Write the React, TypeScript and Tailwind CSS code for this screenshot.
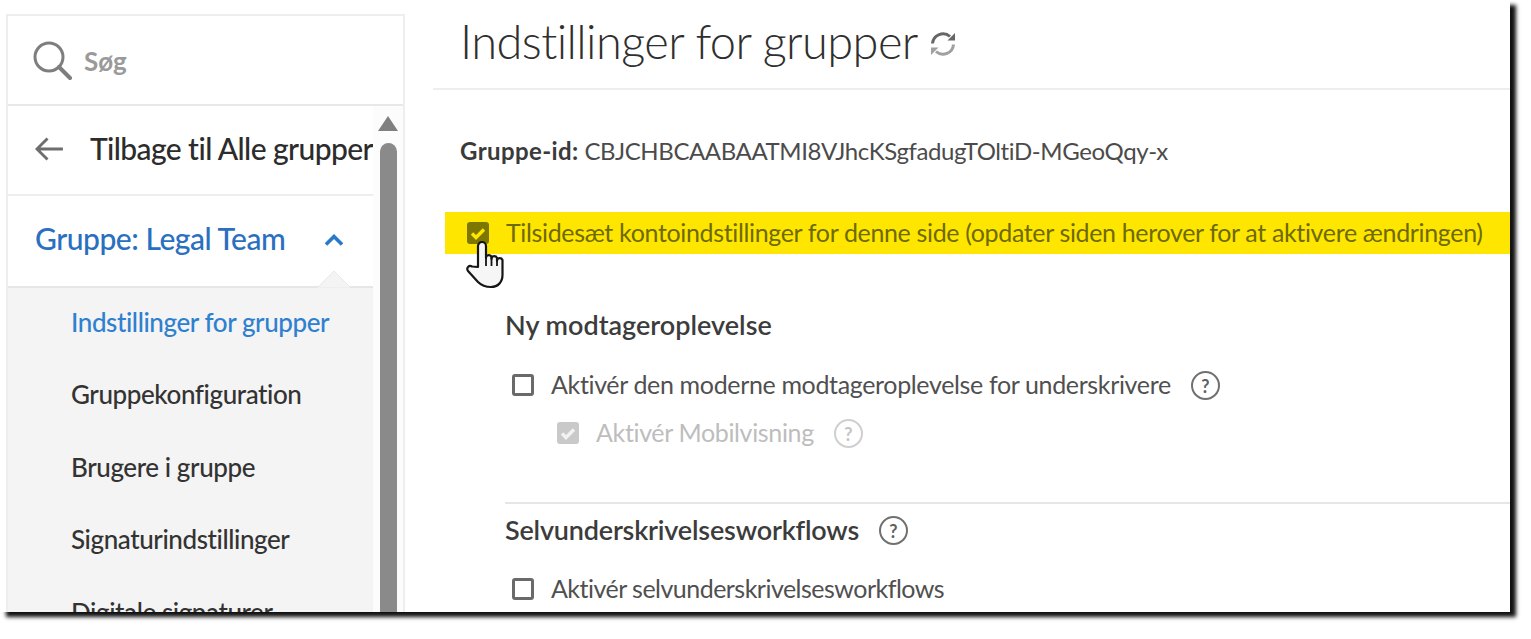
const subItems = [
  { label: 'Indstillinger for grupper', active: true },
  { label: 'Gruppekonfiguration', active: false },
  { label: 'Brugere i gruppe', active: false },
  { label: 'Signaturindstillinger', active: false },
  { label: 'Digitale signaturer', active: false },
];

function HelpIcon({ muted = false }: { muted?: boolean }) {
  return (
    <span
      className={`grid h-[29px] w-[29px] shrink-0 place-items-center rounded-full border-[2.5px] text-[18px] font-bold ${
        muted ? 'border-[#cfcfcf] text-[#c4c4c4]' : 'border-[#707070] text-[#606060]'
      }`}
    >
      ?
    </span>
  );
}

function Box() {
  return <span className="h-[22px] w-[22px] shrink-0 rounded-[3px] border-[3px] border-[#6a6a6a] bg-white" />;
}

function CheckMark({ stroke }: { stroke: string }) {
  return (
    <svg viewBox="0 0 22 22" className="h-full w-full" fill="none">
      <path d="M5 11.5l4 4 8-8" stroke={stroke} strokeWidth="3.4" />
    </svg>
  );
}

function HandCursor() {
  return (
    <svg viewBox="0 0 40 48" className="absolute left-[465px] top-[241px] h-[48px] w-[40px]">
      <path
        d="M13 26V5a4 4 0 0 1 8 0v12-1a3 3 0 0 1 5.5 0v2-1a3 3 0 0 1 5.5 0v3-1a3 3 0 0 1 5.5 0V34C37.5 41 33 46 26 46 20 46 17 45 13 41L3 30C1 27 4 23.5 7 25.5Z"
        fill="#f6f6f6"
        stroke="#161616"
        strokeWidth="2.2"
        strokeLinejoin="round"
      />
      <path d="M21 16v9M26.5 16v9M32 18v7" stroke="#161616" strokeWidth="1.8" fill="none" />
    </svg>
  );
}

export default function App() {
  return (
    <div className="h-[639px] w-[1531px] overflow-hidden bg-white font-['Lato',sans-serif]">
      <div className="relative flex h-[612px] w-[1510px] overflow-hidden bg-white shadow-[6px_5px_4px_#111]">
        {/* sidebar */}
        <aside className="mb-[-40px] ml-[6px] mt-[14px] flex h-[640px] w-[399px] shrink-0 flex-col border-x-2 border-t-2 border-[#eeeeee]">
          <div className="flex h-[90px] shrink-0 items-center border-b-2 border-[#e8e8e8] pl-[24px]">
            <svg viewBox="0 0 40 40" className="h-[40px] w-[40px]" fill="none" stroke="#7e7e7e">
              <circle cx="17" cy="17" r="14" strokeWidth="3" />
              <path d="M27 27l11 11" strokeWidth="4" strokeLinecap="round" />
            </svg>
            <span className="ml-[12px] mt-[2px] text-[26px] font-bold text-[#9a9a9a]">Søg</span>
          </div>
          <div className="flex min-h-0 flex-1">
            <div className="w-[365px] shrink-0">
              <div className="flex h-[90px] items-center border-b-2 border-[#eeeeee] pb-[4px] pl-[27px]">
                <svg viewBox="0 0 30 26" className="mt-[2px] h-[26px] w-[30px]" fill="none" stroke="#6e6e6e" strokeWidth="3">
                  <path d="M29 13H3M13 2L2 13l11 11" />
                </svg>
                <span className="ml-[26px] whitespace-nowrap text-[30px] font-medium tracking-[-0.58px] text-[#2c2c2c]">
                  Tilbage til Alle grupper
                </span>
              </div>
              <div className="relative flex h-[92px] items-center border-b-2 border-[#e6e6e6] pb-[6px] pl-[27px]">
                <span className="text-[30px] font-medium tracking-[-0.47px] text-[#2a70c0]">Gruppe: Legal Team</span>
                <svg viewBox="0 0 20 13" className="absolute left-[316px] top-[37px] h-[13px] w-[20px]" fill="none" stroke="#2a78c8" strokeWidth="3.6">
                  <path d="M2 11.5l8-8 8 8" />
                </svg>
                <svg viewBox="0 0 34 18" className="absolute bottom-[-2px] left-[309px] h-[18px] w-[34px]">
                  <path d="M0 18L17 1l17 17Z" fill="#f4f4f4" stroke="#e9e9e9" strokeWidth="1" />
                </svg>
              </div>
              <nav className="flex h-[400px] flex-col bg-[#f4f4f4] pl-[63px]">
                {subItems.map((item) => (
                  <a
                    key={item.label}
                    className={`flex h-[72.5px] shrink-0 items-center whitespace-nowrap pb-[4px] text-[26px] font-medium tracking-[-0.42px] ${
                      item.active ? 'text-[#2f80cf]' : 'text-[#333333]'
                    }`}
                  >
                    {item.label}
                  </a>
                ))}
              </nav>
            </div>
            <div className="flex flex-1 flex-col items-center bg-[#fcfcfc] pt-[10px]">
              <span className="h-0 w-0 border-x-[10px] border-b-[15px] border-x-transparent border-b-[#808080]" />
              <span className="mt-[12px] w-[17px] flex-1 rounded-t-[9px] bg-[#8a8a8a]" />
            </div>
          </div>
        </aside>

        {/* main */}
        <main className="ml-[28px] min-w-0 flex-1">
          <header className="flex h-[90px] items-center border-b-2 border-[#eeeeee] pl-[27px]">
            <h1 className="mb-[6px] whitespace-nowrap text-[47px] font-light tracking-[-0.6px] text-[#2f2f2f]">
              Indstillinger for grupper
            </h1>
            <svg viewBox="0 0 28 28" className="ml-[11px] h-[28px] w-[28px]" fill="none">
              <path d="M3.5 13.5A10.5 10.5 0 0 1 21 6.5" stroke="#666666" strokeWidth="3" />
              <path d="M18.5 10.5h7.5V3Z" fill="#666666" />
              <path d="M24.5 14.5A10.5 10.5 0 0 1 7 21.5" stroke="#a0a0a0" strokeWidth="3" />
              <path d="M9.5 17.5H2V25Z" fill="#a0a0a0" />
            </svg>
          </header>

          <p className="ml-[27px] mt-[44px] whitespace-nowrap text-[24px] leading-[34px] tracking-[-0.4px] text-[#4b4b4b]">
            <b className="font-bold tracking-[0.4px] text-[#3a3a3a]">Gruppe-id:</b> CBJCHBCAABAATMI8VJhcKSgfadugTOltiD-MGeoQqy-x
          </p>

          <div className="ml-[12px] mt-[44px] flex h-[42px] items-center whitespace-nowrap bg-[#ffe600] pl-[22px] text-[25px] tracking-[-0.35px] text-[#6d6a00]">
            <span className="mr-[17px] h-[22px] w-[22px] shrink-0 rounded-[3px] bg-[#7b7700]">
              <CheckMark stroke="#ffe600" />
            </span>
            Tilsidesæt kontoindstillinger for denne side (opdater siden herover for at aktivere ændringen)
          </div>

          <div className="ml-[72px]">
            <h2 className="mt-[53px] text-[27px] font-semibold leading-[36px] text-[#3c3c3c]">
              Ny modtageroplevelse
            </h2>
            <div className="ml-[7px] mt-[25px] flex h-[34px] items-center whitespace-nowrap text-[25px] tracking-[-0.35px] text-[#505050]">
              <Box />
              <span className="ml-[17px] mr-[20px]">Aktivér den moderne modtageroplevelse for underskrivere</span>
              <HelpIcon />
            </div>
            <div className="ml-[52px] mt-[14px] flex h-[34px] items-center whitespace-nowrap text-[25px] tracking-[-0.35px] text-[#bdbdbd]">
              <span className="h-[22px] w-[22px] shrink-0 rounded-[3px] bg-[#c9c9c9]">
                <CheckMark stroke="#f2f2f2" />
              </span>
              <span className="ml-[17px] mr-[20px]">Aktivér Mobilvisning</span>
              <HelpIcon muted />
            </div>
            <div className="mt-[52px] border-t-2 border-[#e6e6e6]" />
            <div className="mt-[8px] flex h-[36px] items-center whitespace-nowrap">
              <h2 className="mr-[20px] text-[27px] font-semibold tracking-[-0.2px] text-[#3c3c3c]">
                Selvunderskrivelsesworkflows
              </h2>
              <HelpIcon />
            </div>
            <div className="ml-[7px] mt-[24px] flex h-[34px] items-center whitespace-nowrap text-[25px] tracking-[-0.52px] text-[#505050]">
              <Box />
              <span className="ml-[17px]">Aktivér selvunderskrivelsesworkflows</span>
            </div>
          </div>
        </main>

        <HandCursor />
      </div>
    </div>
  );
}
